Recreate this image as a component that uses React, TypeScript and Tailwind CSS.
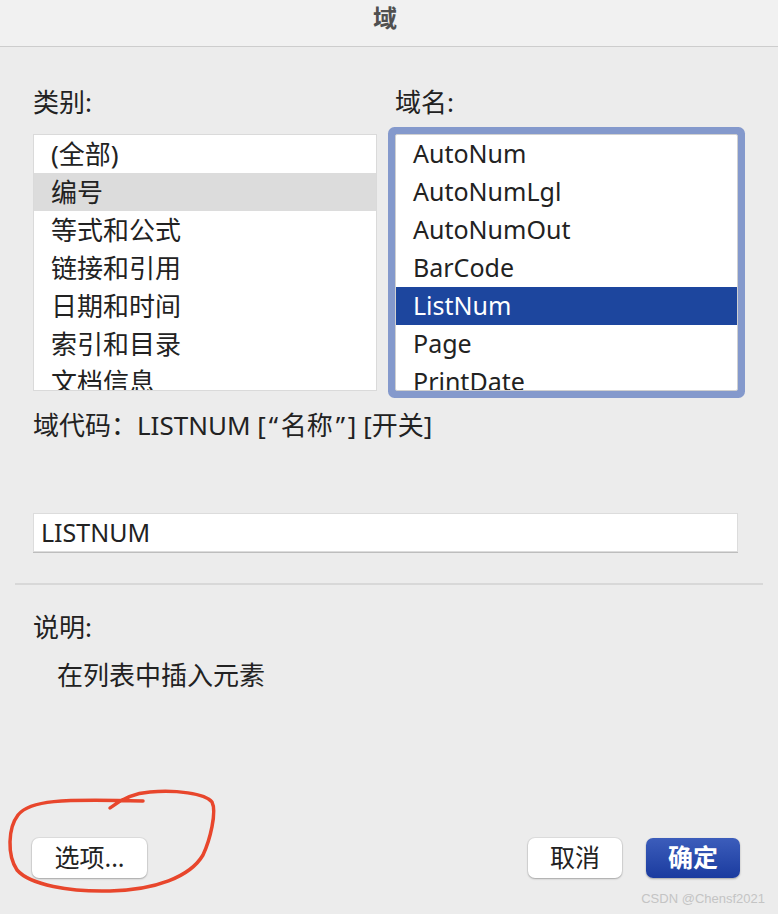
import React from 'react';

const CATEGORIES = ['(全部)', '编号', '等式和公式', '链接和引用', '日期和时间', '索引和目录', '文档信息'];
const FIELDS = ['AutoNum', 'AutoNumLgl', 'AutoNumOut', 'BarCode', 'ListNum', 'Page', 'PrintDate'];

export default function App() {
  const selectedCategory = '编号';
  const selectedField = 'ListNum';

  return (
    <div className="relative w-[778px] h-[914px] overflow-hidden bg-[#ececec] text-[#222] font-['Noto_Sans','Noto_Sans_CJK_SC',sans-serif]">
      <div className="h-[47px] flex items-center justify-center pb-[10px] pr-[8px] bg-[#f1f1f1] border-b border-[#cdcdcd]">
        <span className="text-[24px] font-semibold text-[#505050] leading-none">域</span>
      </div>

      <div className="px-[33px]">
        <div className="mt-[40px] grid grid-cols-[344px_343px] gap-x-[18px] text-[26px] leading-[30px]">
          <div>类别:</div>
          <div>域名:</div>
        </div>

        <div className="mt-[17px] grid grid-cols-[344px_343px] gap-x-[18px]">
          <div className="h-[257px] bg-white border border-[#dadada] overflow-hidden">
            {CATEGORIES.map(c => (
              <div key={c}
                className={`h-[38px] pl-[17px] flex items-center text-[26px] ${selectedCategory === c ? 'bg-[#dcdcdc]' : ''}`}>
                {c}
              </div>
            ))}
          </div>
          <div className="h-[257px] bg-white border border-[#d0d0d0] rounded-[2px] shadow-[0_0_0_7px_#8499cc] overflow-hidden">
            {FIELDS.map(f => (
              <div key={f}
                className={`h-[38px] pl-[17px] flex items-center text-[25px] ${selectedField === f ? 'bg-[#1d469e] text-white' : ''}`}>
                {f}
              </div>
            ))}
          </div>
        </div>

        <div className="mt-[17px] text-[26px] leading-[34px]">
          域代码：LISTNUM [<span className="inline-block w-[15px] text-center">“</span>名称<span className="inline-block w-[15px] text-center">”</span>] [开关]
        </div>

        <div className="mt-[71px] h-[39px] w-[705px] bg-white border border-[#dcdcdc] shadow-[0_1px_0_#bdbdbd] flex items-center pl-[7px] text-[25px]">
          LISTNUM
        </div>

        <div className="mt-[31px] -mx-[18px] h-[2px] bg-[#d8d8d8]" />

        <div className="mt-[27px] text-[26px] leading-[30px]">说明:</div>
        <div className="mt-[18px] pl-[24px] text-[26px] leading-[30px]">在列表中插入元素</div>

        <div className="mt-[148px] flex items-center pr-[5px]">
          <button className="w-[115px] h-[40px] -ml-[1px] rounded-[7px] bg-white text-[25px] shadow-[0_0_0_1px_rgba(0,0,0,0.06),0_1px_2px_rgba(0,0,0,0.25)]">
            选项...
          </button>
          <div className="flex-1" />
          <button className="w-[94px] h-[40px] rounded-[7px] bg-white text-[25px] shadow-[0_0_0_1px_rgba(0,0,0,0.06),0_1px_2px_rgba(0,0,0,0.25)]">
            取消
          </button>
          <button className="ml-[24px] w-[94px] h-[40px] rounded-[7px] bg-gradient-to-b from-[#3c5dbb] to-[#1b3b9f] text-white font-semibold text-[25px] shadow-[0_1px_2px_rgba(0,0,0,0.3)]">
            确定
          </button>
        </div>
      </div>

      {/* hand-drawn annotation */}
      <svg className="absolute left-0 top-0 pointer-events-none" width="778" height="914">
        <path
          d="M110 808 C 120 800, 135 793, 150 792 C 175 790, 205 793, 212 802 C 217 812, 210 840, 203 855 C 190 877, 155 890, 110 891 C 70 892, 30 885, 17 870 C 7 855, 8 828, 18 815 C 30 800, 60 799, 143 801"
          fill="none" stroke="#e8462c" strokeWidth="3.5" strokeLinecap="round" strokeLinejoin="round" />
      </svg>

      <div className="absolute right-[13px] bottom-[6px] text-[13px] text-[#c4c4c4] font-['Liberation_Sans',sans-serif]">
        CSDN @Chensf2021
      </div>
    </div>
  );
}
